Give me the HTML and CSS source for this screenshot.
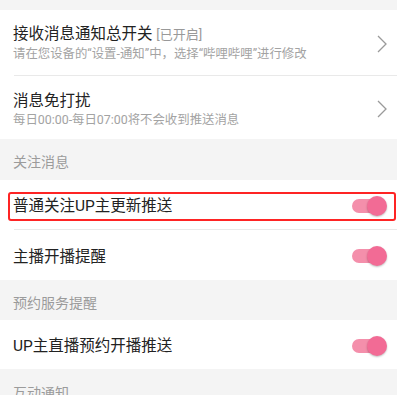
FILE: index.html
```html
<!DOCTYPE html>
<html lang="zh-CN">
<head>
<meta charset="utf-8">
<link rel="stylesheet" href="styles.css">
</head>
<body>
<div class="page">
  <div class="gap-top"></div>
  <section class="group">
    <div class="row row-two row-first">
      <div class="text">
        <div class="title">接收消息通知总开关 <span class="state">[已开启]</span></div>
        <div class="sub">请在您设备的“设置-通知”中，选择“哔哩哔哩”进行修改</div>
      </div>
      <svg class="chev" viewBox="0 0 10 18" width="10" height="18"><polyline points="1,1 9,9 1,17" fill="none" stroke="#9a9a9a" stroke-width="1.3"/></svg>
    </div>
    <div class="divider"></div>
    <div class="row row-two row-second">
      <div class="text">
        <div class="title">消息免打扰</div>
        <div class="sub">每日00:00-每日07:00将不会收到推送消息</div>
      </div>
      <svg class="chev" viewBox="0 0 10 18" width="10" height="18"><polyline points="1,1 9,9 1,17" fill="none" stroke="#9a9a9a" stroke-width="1.3"/></svg>
    </div>
  </section>
  <div class="header h1">关注消息</div>
  <section class="group">
    <div class="row row-one highlighted">
      <div class="title">普通关注UP主更新推送</div>
      <div class="toggle"><span class="track"></span><span class="knob"></span></div>
      <div class="mark"></div>
    </div>
    <div class="divider"></div>
    <div class="row row-one tall">
      <div class="title">主播开播提醒</div>
      <div class="toggle"><span class="track"></span><span class="knob"></span></div>
    </div>
  </section>
  <div class="header h2">预约服务提醒</div>
  <section class="group">
    <div class="row row-one">
      <div class="title">UP主直播预约开播推送</div>
      <div class="toggle"><span class="track"></span><span class="knob"></span></div>
    </div>
  </section>
  <div class="header h3">互动通知</div>
</div>
</body>
</html>
```

FILE: styles.css
```css
html, body {
  margin: 0;
  padding: 0;
  background: #f4f4f4;
}
body {
  font-family: Roboto, "Noto Sans CJK SC", "Noto Sans", sans-serif;
  color: #222;
  width: 397px;
  height: 395px;
  overflow: hidden;
}
.page {
  display: flex;
  flex-direction: column;
}
.gap-top {
  height: 10px;
}
.group {
  background: #fff;
  display: flex;
  flex-direction: column;
}
.row {
  display: flex;
  align-items: center;
  justify-content: space-between;
  padding: 0 10px 0 13px;
  position: relative;
}
.row-first {
  height: 65px;
}
.row-second {
  height: 63px;
}
.row-two .text {
  display: flex;
  flex-direction: column;
  gap: 1px;
}
.row-first .text {
  margin-top: 1px;
}
.row-second .text {
  margin-top: 4px;
}
.title {
  font-size: 15.5px;
  line-height: 20px;
  color: #222;
  white-space: nowrap;
}
.state {
  font-size: 13px;
  color: #999;
}
.sub {
  font-size: 12.4px;
  line-height: 16px;
  color: #a3a3a3;
  white-space: nowrap;
}
.chev {
  display: block;
  margin-top: 2px;
}
.divider {
  height: 1px;
  background: #e9e9e9;
  margin-left: 14px;
}
.header {
  font-size: 14px;
  color: #9b9b9b;
  padding-left: 13px;
  display: flex;
  align-items: center;
  box-sizing: border-box;
}
.h1 {
  height: 41px;
  padding-top: 3px;
}
.h2 {
  height: 40px;
  padding-top: 3px;
}
.h3 {
  height: 40px;
  padding-top: 5px;
}
.row-one {
  height: 49px;
}
.row-one.tall {
  height: 50px;
}
.row-one .title {
  margin-top: 3px;
}
.toggle {
  position: relative;
  width: 35px;
  height: 20px;
  margin-top: 2px;
}
.track {
  position: absolute;
  left: 0;
  top: 3px;
  width: 30px;
  height: 14px;
  border-radius: 7px;
  background: #f48fab;
}
.knob {
  position: absolute;
  right: 0;
  top: 0;
  width: 20px;
  height: 20px;
  border-radius: 50%;
  background: #f26b95;
  box-shadow: 0 1px 2px rgba(0,0,0,0.25);
}
.mark {
  position: absolute;
  left: 8px;
  right: 1px;
  top: 12px;
  height: 29px;
  border: 2px solid #fe2424;
  border-radius: 3px;
  box-sizing: border-box;
  pointer-events: none;
}
```
